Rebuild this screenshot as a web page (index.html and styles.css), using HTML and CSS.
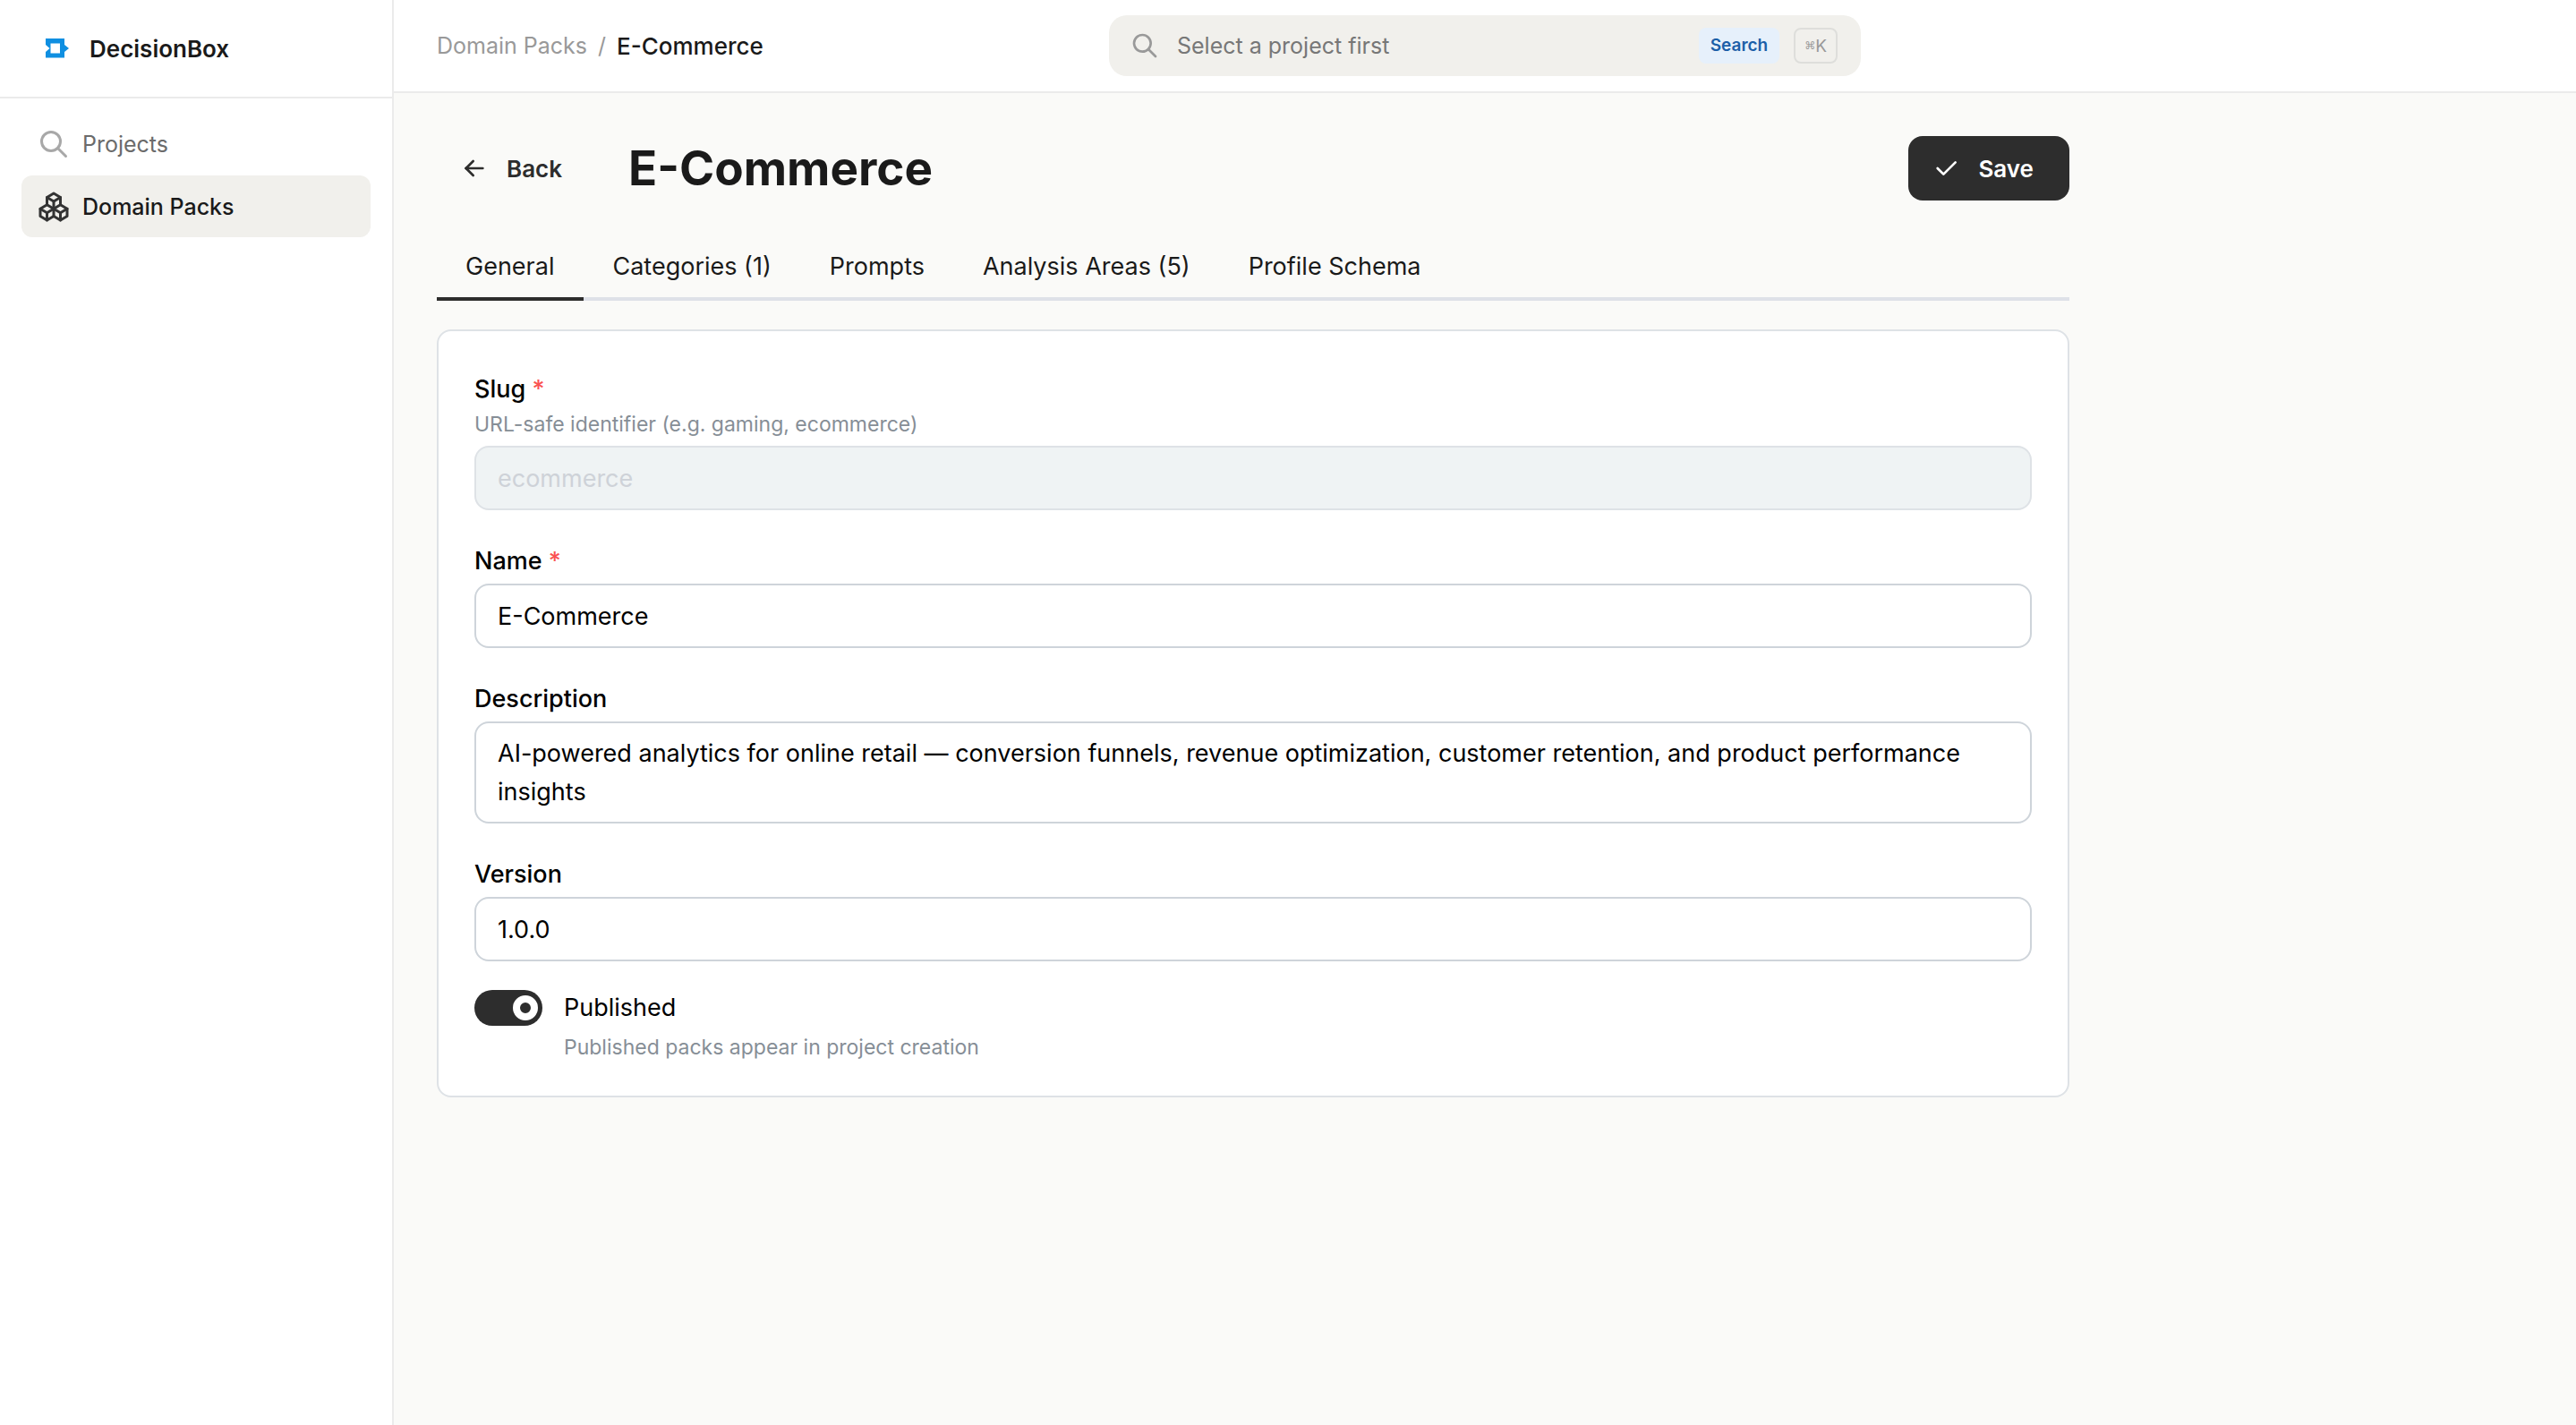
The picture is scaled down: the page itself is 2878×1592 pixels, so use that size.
FILE: index.html
```html
<!DOCTYPE html>
<html lang="en">
<head>
<meta charset="utf-8">
<meta name="viewport" content="width=device-width, initial-scale=1">
<title>E-Commerce – Domain Packs – DecisionBox</title>
<link rel="stylesheet" href="styles.css">
</head>
<body>
<div class="app">
  <aside class="sidebar">
    <div class="brand">
      <svg class="brand-logo" viewBox="0 0 44 44" aria-hidden="true">
        <path fill="#0f8fe1" fill-rule="evenodd" d="M11 11H32V18L37 22L32 26V32.5H11V26L15.5 22L11 18ZM16.5 16.5V27.5H27V16.5Z"/>
      </svg>
      <span class="brand-name">DecisionBox</span>
    </div>
    <nav class="nav" aria-label="Main">
      <a class="nav-link" href="#projects">
        <svg class="icon nav-icon" viewBox="0 0 24 24" aria-hidden="true"><path d="M3 10a7 7 0 1 0 14 0a7 7 0 1 0 -14 0"/><path d="M21 21l-6 -6"/></svg>
        <span>Projects</span>
      </a>
      <a class="nav-link nav-link-active" href="#domain-packs" aria-current="page">
        <svg class="icon nav-icon" viewBox="0 0 24 24" aria-hidden="true"><path d="M7 16.5l-5 -3l5 -3l5 3v5.5l-5 3z"/><path d="M2 13.5v5.5l5 3"/><path d="M7 16.545l5 -3.03"/><path d="M17 16.5l-5 -3l5 -3l5 3v5.5l-5 3z"/><path d="M12 19l5 3"/><path d="M17 16.5l5 -3"/><path d="M12 13.5v-5.5l-5 -3l5 -3l5 3v5.5"/><path d="M7 5.03v5.455"/><path d="M12 8l5 -3"/></svg>
        <span>Domain Packs</span>
      </a>
    </nav>
  </aside>

  <div class="main">
    <header class="topbar">
      <nav class="crumbs" aria-label="Breadcrumb">
        <a class="crumb" href="#domain-packs">Domain Packs</a>
        <span class="crumb">/</span>
        <span class="crumb-current">E-Commerce</span>
      </nav>
      <div class="search">
        <svg class="icon search-icon" viewBox="0 0 24 24" aria-hidden="true"><path d="M3 10a7 7 0 1 0 14 0a7 7 0 1 0 -14 0"/><path d="M21 21l-6 -6"/></svg>
        <input class="search-input" type="text" placeholder="Select a project first" aria-label="Search">
        <span class="search-badge">Search</span>
        <kbd class="search-key"><span class="search-cmd">⌘</span>K</kbd>
      </div>
    </header>

    <main class="content">
      <div class="page-head">
        <button class="btn btn-plain" type="button">
          <svg class="icon btn-icon" viewBox="0 0 24 24" aria-hidden="true"><path d="M5 12l14 0"/><path d="M5 12l6 6"/><path d="M5 12l6 -6"/></svg>
          Back
        </button>
        <h1 class="page-title">E-Commerce</h1>
        <button class="btn btn-dark" type="submit" form="pack-form">
          <svg class="icon btn-icon" viewBox="0 0 24 24" aria-hidden="true"><path d="M5 12l5 5l10 -10"/></svg>
          Save
        </button>
      </div>

      <div class="tabs" role="tablist">
        <button class="tab tab-active" type="button" role="tab" aria-selected="true">General</button>
        <button class="tab" type="button" role="tab" aria-selected="false">Categories (1)</button>
        <button class="tab" type="button" role="tab" aria-selected="false">Prompts</button>
        <button class="tab" type="button" role="tab" aria-selected="false">Analysis Areas (5)</button>
        <button class="tab" type="button" role="tab" aria-selected="false">Profile Schema</button>
      </div>

      <form class="card" id="pack-form">
        <div class="field">
          <label class="label" for="slug">Slug <span class="required">*</span></label>
          <p class="hint field-hint" id="slug-hint">URL-safe identifier (e.g. gaming, ecommerce)</p>
          <input class="input" id="slug" type="text" value="ecommerce" aria-describedby="slug-hint" disabled>
        </div>
        <div class="field">
          <label class="label" for="name">Name <span class="required">*</span></label>
          <input class="input" id="name" type="text" value="E-Commerce">
        </div>
        <div class="field">
          <label class="label" for="description">Description</label>
          <textarea class="input textarea" id="description" rows="2">AI-powered analytics for online retail — conversion funnels, revenue optimization, customer retention, and product performance insights</textarea>
        </div>
        <div class="field">
          <label class="label" for="version">Version</label>
          <input class="input" id="version" type="text" value="1.0.0">
        </div>
        <div class="switch-row">
          <input class="switch" id="published" type="checkbox" role="switch" aria-describedby="published-hint" checked>
          <div class="switch-text">
            <label class="switch-label" for="published">Published</label>
            <p class="hint" id="published-hint">Published packs appear in project creation</p>
          </div>
        </div>
      </form>
    </main>
  </div>
</div>
</body>
</html>
```
FILE: styles.css
```css
*,
*::before,
*::after {
  box-sizing: border-box;
}

body {
  margin: 0;
  background: #fafaf8;
  color: #1a1a1a;
  font-family: Inter, "Liberation Sans", sans-serif;
  font-size: 27px;
}

button,
input,
textarea {
  font: inherit;
  color: inherit;
}

.app {
  display: flex;
  min-height: 100vh;
}

.icon {
  flex: none;
  fill: none;
  stroke: currentColor;
  stroke-width: 2;
  stroke-linecap: round;
  stroke-linejoin: round;
}

/* Sidebar */

.sidebar {
  flex: none;
  width: 440px;
  background: #fff;
  border-right: 2px solid #ebebeb;
}

.brand {
  display: flex;
  align-items: center;
  gap: 16px;
  height: 110px;
  padding: 0 40px;
  border-bottom: 2px solid #ebebeb;
}

.brand-logo {
  flex: none;
  width: 44px;
  height: 44px;
}

.brand-name {
  font-size: 26px;
  font-weight: 600;
}

.nav {
  display: flex;
  flex-direction: column;
  gap: 1px;
  padding: 16px 24px;
}

.nav-link {
  display: flex;
  align-items: center;
  gap: 14px;
  height: 69px;
  padding: 0 18px;
  border-radius: 12px;
  color: #6b6b6b;
  font-size: 25px;
  text-decoration: none;
}

.nav-icon {
  width: 36px;
  height: 36px;
  color: #a8a8a8;
  stroke-width: 2;
}

.nav-link-active {
  background: #f1f0ec;
  color: #1a1a1a;
  font-weight: 500;
}

.nav-link-active .nav-icon {
  color: #333;
}

/* Top bar */

.main {
  flex: 1;
  min-width: 0;
}

.topbar {
  display: grid;
  grid-template-columns: 1fr minmax(0, 840px) 1fr;
  align-items: center;
  height: 104px;
  padding: 0 48px;
  background: #fff;
  border-bottom: 2px solid #ebebeb;
}

.crumbs {
  display: flex;
  align-items: center;
  gap: 12px;
  font-size: 25px;
  white-space: nowrap;
}

.crumb {
  color: #999;
  text-decoration: none;
}

.crumb-current {
  font-size: 26px;
  font-weight: 500;
}

.search {
  display: flex;
  align-items: center;
  height: 68px;
  padding: 0 26px 0 24px;
  background: #f1f0ec;
  border-radius: 20px;
}

.search-icon {
  width: 32px;
  height: 32px;
  color: #999;
}

.search-input {
  flex: 1;
  min-width: 0;
  height: 40px;
  margin: 0 20px;
  padding: 0;
  border: 0;
  outline: 0;
  background: none;
  font-size: 25px;
}

.search-input::placeholder {
  color: #777;
  opacity: 1;
}

.search-badge {
  height: 40px;
  margin-right: 16px;
  padding: 0 13px;
  background: #e6f0fb;
  border-radius: 8px;
  color: #1c5fa8;
  font-size: 19px;
  font-weight: 600;
  line-height: 40px;
}

.search-key {
  display: flex;
  align-items: center;
  height: 40px;
  padding: 0 10px;
  border: 2px solid #dededb;
  border-radius: 8px;
  color: #999;
  font-family: inherit;
  font-size: 19px;
}

.search-cmd {
  font-family: "DejaVu Sans", sans-serif;
  font-size: 12px;
}

/* Page */

.content {
  max-width: 1920px;
  padding: 48px;
}

.page-head {
  display: flex;
  align-items: center;
  gap: 34px;
}

.page-title {
  flex: 1;
  margin: 0;
  font-size: 53px;
  font-weight: 700;
  line-height: 72px;
}

.btn {
  display: flex;
  align-items: center;
  gap: 20px;
  height: 72px;
  padding: 0 40px 0 26px;
  border: 0;
  border-radius: 16px;
  font-size: 26px;
  font-weight: 600;
}

.btn-icon {
  width: 32px;
  height: 32px;
}

.btn-plain {
  background: none;
  color: #2d2d2d;
}

.btn-dark {
  background: #2d2d2d;
  color: #fff;
}

.tabs {
  display: flex;
  margin: 36px 0 32px;
  border-bottom: 4px solid #dee1e8;
}

.tab {
  margin-bottom: -4px;
  padding: 20px 33px 16px 32px;
  border: 0;
  border-bottom: 4px solid transparent;
  background: none;
  line-height: 36px;
  white-space: nowrap;
}

.tab-active {
  border-bottom-color: #2d2d2d;
}

/* Form */

.card {
  display: flex;
  flex-direction: column;
  gap: 32px;
  padding: 40px;
  background: #fff;
  border: 2px solid #dee2e6;
  border-radius: 16px;
  color: #000;
}

.field {
  display: flex;
  flex-direction: column;
}

.label {
  font-weight: 500;
  line-height: 50px;
}

.required {
  color: #fa5252;
}

.hint {
  margin: 0;
  color: #868e96;
  font-size: 23px;
  line-height: 28px;
}

.field-hint {
  margin-bottom: 10px;
}

.input {
  width: 100%;
  height: 72px;
  padding: 0 24px;
  border: 2px solid #ced4da;
  border-radius: 16px;
  background: #fff;
}

.input:disabled {
  border-color: #dee2e6;
  background: #eff3f4;
  color: #ced2d8;
}

.textarea {
  display: block;
  height: 114px;
  padding: 12px 24px;
  line-height: 43px;
  resize: none;
}

.switch-row {
  display: flex;
  align-items: flex-start;
  gap: 24px;
}

.switch {
  appearance: none;
  display: flex;
  flex: none;
  align-items: center;
  width: 76px;
  height: 40px;
  margin: 0;
  padding: 0 5px;
  border-radius: 20px;
  background: #ced4da;
}

.switch::before {
  content: "";
  width: 28px;
  height: 28px;
  border: 8px solid #fff;
  border-radius: 50%;
  background: #ced4da;
}

.switch:checked {
  justify-content: flex-end;
  background: #2d2d2d;
}

.switch:checked::before {
  background: #2d2d2d;
}

.switch-text {
  display: flex;
  flex-direction: column;
  gap: 10px;
}

.switch-label {
  line-height: 40px;
}
```
